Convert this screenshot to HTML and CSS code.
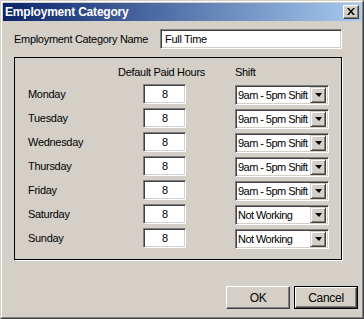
FILE: index.html
```html
<!DOCTYPE html>
<html>
<head>
<meta charset="utf-8">
<link rel="stylesheet" href="styles.css">
</head>
<body>
<div class="window">
  <div class="frame">
    <div class="titlebar">
      <span class="title">Employment Category</span>
      <div class="close">
        <svg width="8" height="7" viewBox="0 0 8 7"><path d="M0 0h2l2 2.5L6 0h2L5 3.5 8 7H6L4 4.5 2 7H0l3-3.5z" fill="#000"/></svg>
      </div>
    </div>
    <div class="content">
      <div class="name-row">
        <span class="name-label">Employment Category Name</span>
        <div class="field name-field">Full Time</div>
      </div>
      <div class="group">
        <div class="grid">
          <div></div>
          <div class="hdr hdr-hours">Default Paid Hours</div>
          <div class="hdr hdr-shift">Shift</div>

          <div class="day">Monday</div>
          <div class="field num">8</div>
          <div class="field select"><span class="sel-text">9am - 5pm Shift</span><span class="drop"><i class="tri"></i></span></div>

          <div class="day">Tuesday</div>
          <div class="field num">8</div>
          <div class="field select"><span class="sel-text">9am - 5pm Shift</span><span class="drop"><i class="tri"></i></span></div>

          <div class="day">Wednesday</div>
          <div class="field num">8</div>
          <div class="field select"><span class="sel-text">9am - 5pm Shift</span><span class="drop"><i class="tri"></i></span></div>

          <div class="day">Thursday</div>
          <div class="field num">8</div>
          <div class="field select"><span class="sel-text">9am - 5pm Shift</span><span class="drop"><i class="tri"></i></span></div>

          <div class="day">Friday</div>
          <div class="field num">8</div>
          <div class="field select"><span class="sel-text">9am - 5pm Shift</span><span class="drop"><i class="tri"></i></span></div>

          <div class="day">Saturday</div>
          <div class="field num">8</div>
          <div class="field select"><span class="sel-text">Not Working</span><span class="drop"><i class="tri"></i></span></div>

          <div class="day">Sunday</div>
          <div class="field num">8</div>
          <div class="field select"><span class="sel-text">Not Working</span><span class="drop"><i class="tri"></i></span></div>
        </div>
      </div>
      <div class="buttons">
        <div class="btn">OK</div>
        <div class="btn default"><span class="btn-inner">Cancel</span></div>
      </div>
    </div>
  </div>
</div>
</body>
</html>
```

FILE: styles.css
```css
* { box-sizing: border-box; }
html, body { margin: 0; padding: 0; background: #d4d0c8; }
body {
  font-family: "Liberation Sans", Arial, sans-serif;
  font-size: 11px;
  letter-spacing: -0.3px;
  color: #000;
}
.window {
  width: 364px;
  height: 319px;
  border: 1px solid;
  border-color: #d4d0c8 #404040 #404040 #d4d0c8;
  background: #d4d0c8;
}
.frame {
  height: 100%;
  border: 1px solid;
  border-color: #fff #808080 #808080 #fff;
  padding: 1px;
  display: flex;
  flex-direction: column;
}
.titlebar {
  height: 18px;
  background: linear-gradient(to right, #0a246a, #a6caf0);
  display: flex;
  align-items: center;
  justify-content: space-between;
  padding: 0 2px 0 2px;
}
.title {
  color: #fff;
  font-weight: bold;
  font-size: 12px;
  letter-spacing: -0.2px;
}
.close {
  width: 16px;
  height: 14px;
  background: #d4d0c8;
  border: 1px solid;
  border-color: #fff #404040 #404040 #fff;
  box-shadow: inset -1px -1px 0 #808080;
  display: flex;
  align-items: center;
  justify-content: center;
  padding: 0 1px 1px 0;
}
.close svg { display: block; }
.content {
  flex: 1;
  padding: 8px 3px 0 11px;
  display: flex;
  flex-direction: column;
}
.name-row {
  display: flex;
  align-items: center;
  height: 20px;
}
.name-label { width: 146px; }
.field {
  background: #fff;
  border: 1px solid;
  border-color: #808080 #fff #fff #808080;
  box-shadow: inset 1px 1px 0 #404040, inset -1px -1px 0 #d4d0c8;
  height: 20px;
  display: flex;
  align-items: center;
  white-space: nowrap;
  overflow: hidden;
}
.name-field {
  width: 182px;
  padding-left: 4px;
}
.group {
  margin-top: 8px;
  width: 328px;
  border: 1px solid #000;
  box-shadow: 1px 1px 0 #fff;
  padding: 8px 0 11px 13px;
}
.grid {
  display: grid;
  grid-template-columns: 115px 43px 49px 94px;
  grid-template-rows: 14px;
  grid-auto-rows: 20px;
  row-gap: 4px;
  align-items: center;
}
.grid > :nth-child(3n+2) { grid-column: 2; }
.grid > :nth-child(3n) { grid-column: 4; }
.hdr { white-space: nowrap; align-self: start; }
.hdr-hours { justify-self: center; margin-right: 6px; }
.grid > :nth-child(-n+3) { margin-bottom: 1px; }
.num { justify-content: center; padding-left: 1px; }
.select {
  padding: 2px 2px 2px 1px;
  margin-top: 2px;
}
.sel-text {
  flex: 1;
  overflow: hidden;
  white-space: nowrap;
  padding-left: 1px;
  letter-spacing: -0.55px;
}
.drop {
  width: 16px;
  height: 16px;
  flex: none;
  background: #d4d0c8;
  border: 1px solid;
  border-color: #d4d0c8 #404040 #404040 #d4d0c8;
  box-shadow: inset 1px 1px 0 #fff, inset -1px -1px 0 #808080;
  display: flex;
  align-items: center;
  justify-content: center;
}
.tri {
  width: 0;
  height: 0;
  border-left: 4px solid transparent;
  border-right: 3px solid transparent;
  border-top: 4px solid #000;
}
.buttons {
  margin-top: 26px;
  display: flex;
  justify-content: flex-end;
  gap: 4px;
}
.btn {
  width: 64px;
  height: 23px;
  border: 1px solid;
  border-color: #fff #404040 #404040 #fff;
  box-shadow: inset -1px -1px 0 #808080;
  display: flex;
  align-items: center;
  justify-content: center;
  font-size: 12px;
}
.btn.default {
  border: 1px solid #000;
  box-shadow: none;
  padding: 0;
}
.btn-inner {
  width: 100%;
  height: 100%;
  border: 1px solid;
  border-color: #fff #404040 #404040 #fff;
  box-shadow: inset -1px -1px 0 #808080;
  display: flex;
  align-items: center;
  justify-content: center;
}
```
